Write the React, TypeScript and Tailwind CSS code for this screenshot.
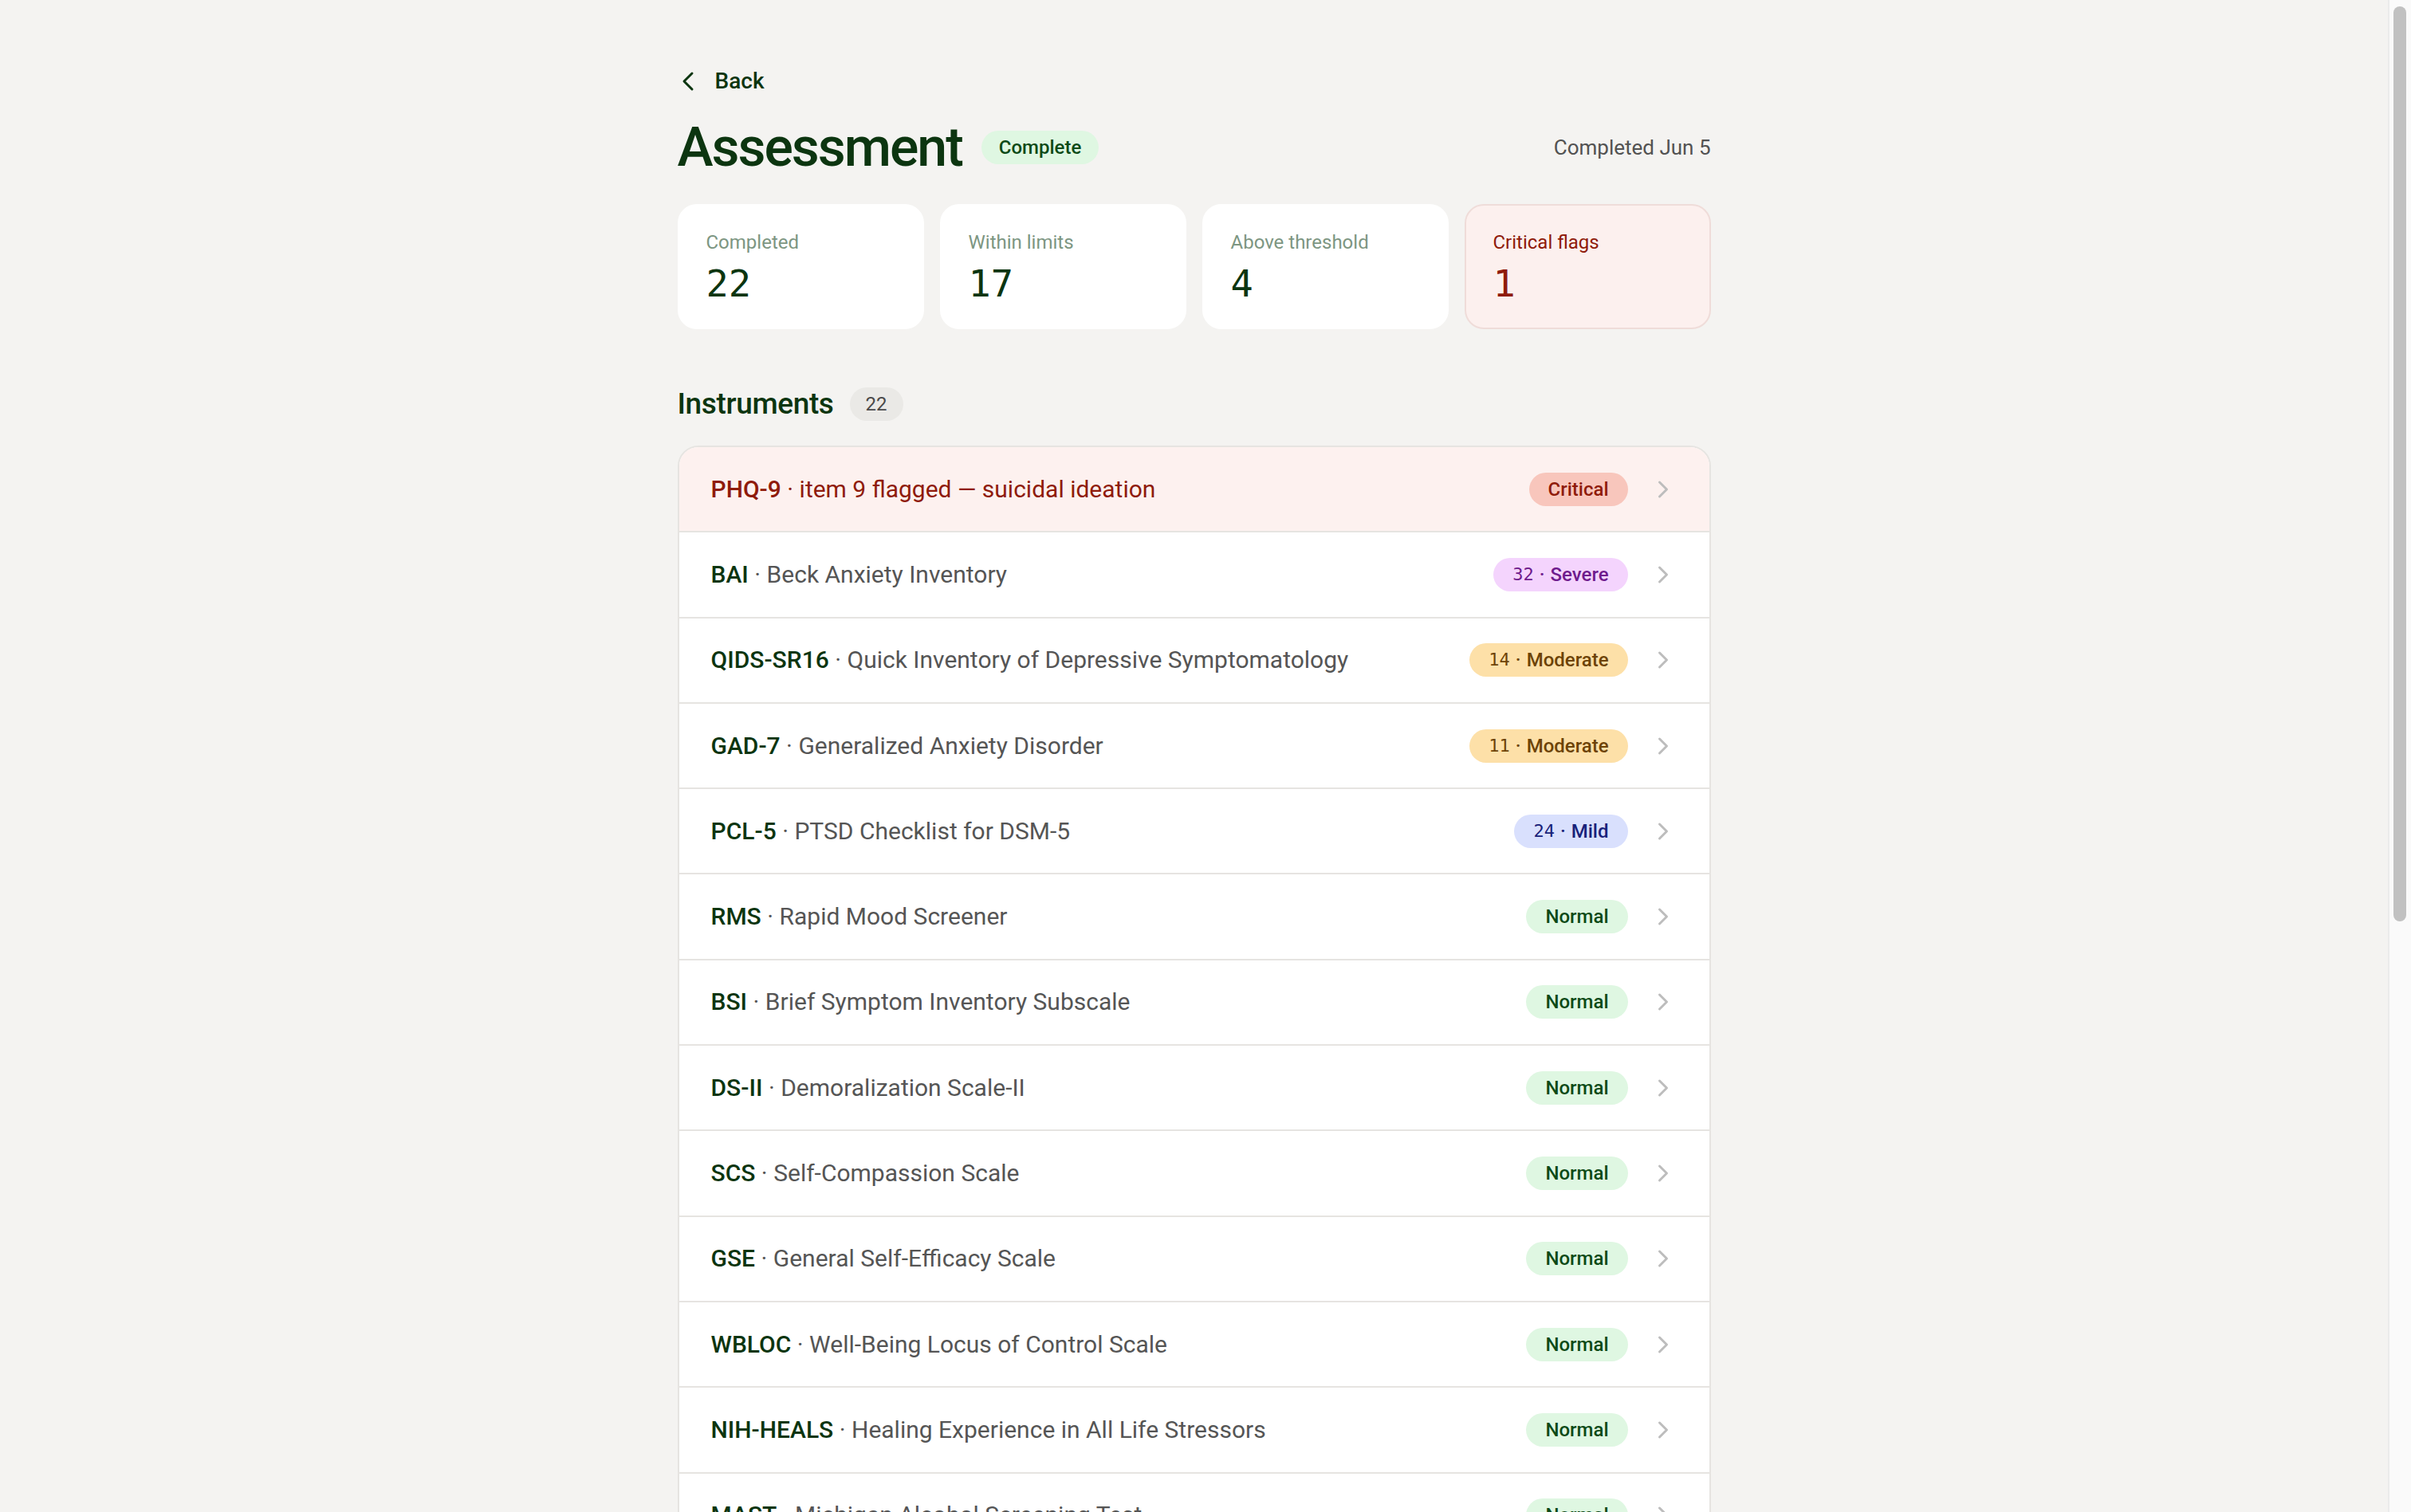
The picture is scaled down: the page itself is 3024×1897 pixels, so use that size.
import React from "react";
import { ChevronLeft, ChevronRight } from "lucide-react";

type Tone = "critical" | "severe" | "moderate" | "mild" | "normal";

const rows: { code: string; name: string; tone: Tone; label: string; score?: string }[] = [
  { code: "PHQ-9", name: "item 9 flagged — suicidal ideation", tone: "critical", label: "Critical" },
  { code: "BAI", name: "Beck Anxiety Inventory", tone: "severe", label: "Severe", score: "32" },
  { code: "QIDS-SR16", name: "Quick Inventory of Depressive Symptomatology", tone: "moderate", label: "Moderate", score: "14" },
  { code: "GAD-7", name: "Generalized Anxiety Disorder", tone: "moderate", label: "Moderate", score: "11" },
  { code: "PCL-5", name: "PTSD Checklist for DSM-5", tone: "mild", label: "Mild", score: "24" },
  { code: "RMS", name: "Rapid Mood Screener", tone: "normal", label: "Normal" },
  { code: "BSI", name: "Brief Symptom Inventory Subscale", tone: "normal", label: "Normal" },
  { code: "DS-II", name: "Demoralization Scale-II", tone: "normal", label: "Normal" },
  { code: "SCS", name: "Self-Compassion Scale", tone: "normal", label: "Normal" },
  { code: "GSE", name: "General Self-Efficacy Scale", tone: "normal", label: "Normal" },
  { code: "WBLOC", name: "Well-Being Locus of Control Scale", tone: "normal", label: "Normal" },
  { code: "NIH-HEALS", name: "Healing Experience in All Life Stressors", tone: "normal", label: "Normal" },
  { code: "MAST", name: "Michigan Alcohol Screening Test", tone: "normal", label: "Normal" },
  { code: "AUDIT-C", name: "Alcohol Use Disorders Identification Test", tone: "normal", label: "Normal" },
  { code: "DAST-10", name: "Drug Abuse Screening Test", tone: "normal", label: "Normal" },
  { code: "ISI", name: "Insomnia Severity Index", tone: "normal", label: "Normal" },
  { code: "PSS", name: "Perceived Stress Scale", tone: "normal", label: "Normal" },
  { code: "MDQ", name: "Mood Disorder Questionnaire", tone: "normal", label: "Normal" },
  { code: "ASRS", name: "Adult ADHD Self-Report Scale", tone: "normal", label: "Normal" },
  { code: "EAT-26", name: "Eating Attitudes Test", tone: "normal", label: "Normal" },
  { code: "UCLA-LS", name: "UCLA Loneliness Scale", tone: "normal", label: "Normal" },
  { code: "WHO-5", name: "Well-Being Index", tone: "normal", label: "Normal" },
];

const toneClass: Record<Tone, string> = {
  critical: "bg-[#f8c6bc] text-[#8f1b0b]",
  severe: "bg-[#f4d4fd] text-[#6f1b8d]",
  moderate: "bg-[#fde0a8] text-[#6d4306]",
  mild: "bg-[#d9e0fd] text-[#18227a]",
  normal: "bg-[#dff7e2] text-[#0d4a17]",
};

function Badge({ tone, label, score }: { tone: Tone; label: string; score?: string }) {
  return (
    <span
      className={`inline-flex h-[42px] items-center rounded-full px-[24px] text-[24px] font-medium leading-none ${toneClass[tone]}`}
    >
      {score ? (
        <>
          <span className="font-['DejaVu_Sans_Mono',monospace] text-[22px]">{score}</span>
          <span className="mx-[7px]">·</span>
        </>
      ) : null}
      {label}
    </span>
  );
}

function StatCard({ label, value, critical }: { label: string; value: string; critical?: boolean }) {
  return (
    <div
      className={`flex flex-col rounded-[24px] border-2 px-[34px] pt-[30px] pb-[27px] ${
        critical ? "border-[#efdcd9] bg-[#fcf0ee]" : "border-white bg-white"
      }`}
    >
      <div className={`text-[24px] leading-[32px] ${critical ? "text-[#8f1b0b]" : "text-[#7d9682]"}`}>{label}</div>
      <div
        className={`mt-[8px] font-['DejaVu_Sans_Mono',monospace] text-[47px] leading-[56px] ${
          critical ? "text-[#8f1b0b]" : "text-[#0c3510]"
        }`}
      >
        {value}
      </div>
    </div>
  );
}

export default function App() {
  return (
    <div className="flex h-screen bg-[#f4f3f1] font-['Roboto','Liberation_Sans',sans-serif]">
      <div className="min-w-0 flex-1 overflow-y-auto [scrollbar-width:none]">
        <div className="mx-auto w-[1296px] pt-[82px] pb-[220px]">
          {/* Back */}
          <div className="flex h-[40px] items-center">
            <button className="-ml-[7px] flex items-center gap-[14px] text-[28px] font-medium text-[#0c3510]">
              <ChevronLeft size={40} strokeWidth={1.8} />
              <span>Back</span>
            </button>
          </div>

          {/* Title row */}
          <div className="mt-[23px] flex h-[80px] items-center justify-between">
            <div className="flex items-center gap-[24px]">
              <h1 className="text-[68px] font-medium leading-none tracking-[-0.03em] text-[#0c3510]">Assessment</h1>
              <span className="inline-flex h-[42px] items-center rounded-full bg-[#dff7e2] px-[22px] text-[24px] font-medium text-[#0d4a17]">
                Complete
              </span>
            </div>
            <div className="text-[26px] text-[#525252]">Completed Jun 5</div>
          </div>

          {/* Stats */}
          <div className="mt-[31px] grid grid-cols-4 gap-[20px]">
            <StatCard label="Completed" value="22" />
            <StatCard label="Within limits" value="17" />
            <StatCard label="Above threshold" value="4" />
            <StatCard label="Critical flags" value="1" critical />
          </div>

          {/* Instruments header */}
          <div className="mt-[72px] flex h-[44px] items-center gap-[20px]">
            <h2 className="text-[37px] font-medium tracking-[-0.01em] text-[#0c3510]">Instruments</h2>
            <span className="inline-flex h-[42px] items-center rounded-full bg-[#eae9e6] px-[20px] text-[24px] text-[#4a4a4a]">
              22
            </span>
          </div>

          {/* List */}
          <div className="mt-[30px] overflow-hidden rounded-[26px] border-2 border-[#e6e4e1] bg-white">
            {rows.map((r, i) => {
              const crit = r.tone === "critical";
              return (
                <div
                  key={r.code}
                  className={`flex h-[107.3px] items-center justify-between pl-[40px] pr-[40px] ${
                    i < rows.length - 1 ? "border-b-2 border-[#e6e4e1]" : ""
                  } ${crit ? "bg-[#fdf1ef]" : ""}`}
                >
                  <div className="text-[30px] leading-none">
                    <span className={`font-medium ${crit ? "text-[#8f1b0b]" : "text-[#0c3510]"}`}>{r.code}</span>
                    <span className={crit ? "text-[#8f1b0b]" : "text-[#555555]"}> · {r.name}</span>
                  </div>
                  <div className="flex items-center gap-[26px]">
                    <Badge tone={r.tone} label={r.label} score={r.score} />
                    <ChevronRight size={36} strokeWidth={2} className="text-[#bdbdbd]" />
                  </div>
                </div>
              );
            })}
          </div>
        </div>
      </div>

      {/* Scrollbar track */}
      <div className="flex w-[29px] shrink-0 flex-col border-l-2 border-[#ebebeb] bg-[#fafafa] pt-[8px] pl-[5px]">
        <div className="h-[1148px] w-[16px] rounded-full bg-[#c1c1c1]" />
      </div>
    </div>
  );
}
